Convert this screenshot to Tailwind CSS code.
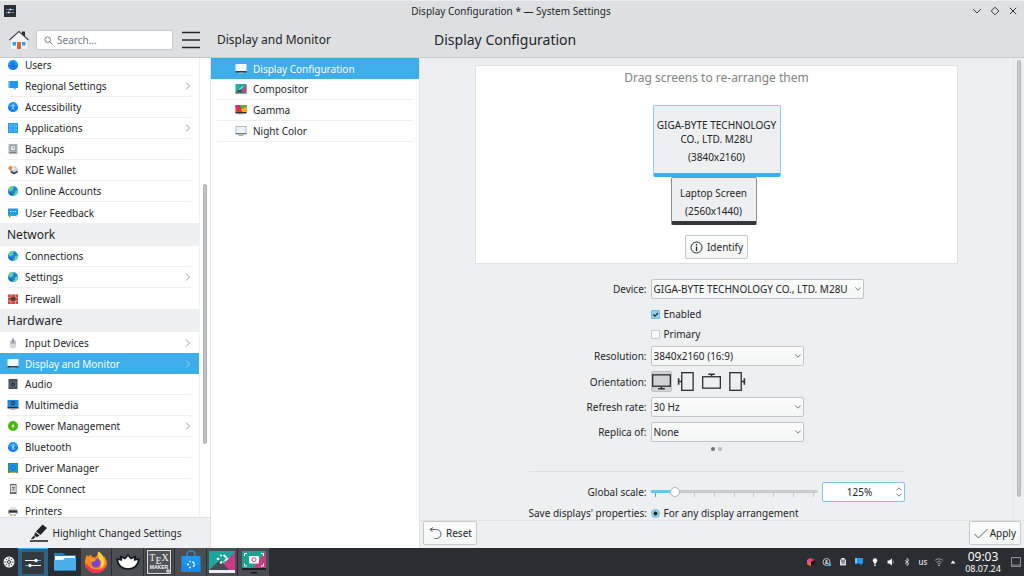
<!DOCTYPE html>
<html lang="en">
<head>
    <meta charset="UTF-8">
    <meta name="viewport" content="width=device-width, initial-scale=1.0">
    <title>Display Configuration * — System Settings</title>
    <script src="https://cdn.jsdelivr.net/npm/@tailwindcss/browser@4"></script>
</head>
<body class="h-screen flex flex-col overflow-hidden bg-[#eeeff1] text-[#232629] text-[10px] leading-[14px] font-['Noto_Sans',sans-serif]">

    <!-- Shared icons -->
    <svg class="hidden" aria-hidden="true">
        <symbol id="chevron" viewBox="0 0 6 10"><path d="M1 1.5 4.5 5 1 8.5" fill="none" stroke="currentColor" stroke-width="0.9"/></symbol>
        <symbol id="down" viewBox="0 0 8 6"><path d="M1.3 1.5 4 4.2 6.7 1.5" fill="none" stroke="currentColor" stroke-width="0.9"/></symbol>
        <symbol id="globe" viewBox="0 0 12 12">
            <circle cx="6" cy="6" r="5" fill="#1d86d8"/>
            <path d="M1.2 5C2 2.4 4 1.1 6.4 1.1L7 2.4 5.4 3.6 6.6 4.6 4.6 5.4 3.4 6.8 2.4 5.6ZM8 6.6 9.9 5.2 11 6.2C10.8 8.6 9 10.6 6.9 10.9L6.4 9.4 8 8.2Z" fill="#5fd6a0"/>
            <path d="M2.2 7 4.6 7.8 5.4 9.6 4.8 10.8C3 10.3 1.6 8.9 1.2 7.2Z" fill="#1669b8"/>
        </symbol>
        <symbol id="monitor" viewBox="0 0 12 12">
            <rect x="0.5" y="1" width="11" height="7.5" fill="#f3f7fa"/>
            <rect x="0.5" y="8" width="11" height="1.5" fill="#343a40"/>
            <rect x="3.5" y="9.7" width="5" height="1" fill="#aab0b5"/>
        </symbol>
        <symbol id="bluedot" viewBox="0 0 12 12"><circle cx="6" cy="6" r="5" fill="#1d99f3"/><path d="M1 6a5 5 0 0 0 10 0" fill="#147ff0"/></symbol>
    </svg>

    <!-- Window title -->
    <header class="shrink-0 bg-[#dedfe1] border-b border-[#c6c8ca]">
        <div class="h-[21px] grid grid-cols-[1fr_auto_1fr] items-center border-t border-[#eceded] pl-1 pr-[6px]">
            <svg class="size-3" viewBox="0 0 12 12">
                <rect width="12" height="12" rx="0.5" fill="#2b3035"/>
                <path d="M2 4.5h8M2 7.5h8" stroke="#9aa3aa" stroke-width="0.7"/>
                <path d="M6.5 4.5H10M2 7.5h2.5" stroke="#3daee9" stroke-width="1.1"/>
                <path d="M5.5 3.7h1.6v1.6H5.5zM4 6.7h1.6v1.6H4z" fill="#fff"/>
            </svg>
            <span>Display Configuration * — System Settings</span>
            <div class="flex justify-end gap-2 text-[#34383b]">
                <button aria-label="Minimize"><svg class="size-[10px]" viewBox="0 0 10 10"><path d="M1.2 3.2 5 7 8.8 3.2" fill="none" stroke="currentColor"/></svg></button>
                <button aria-label="Maximize"><svg class="size-[10px]" viewBox="0 0 10 10"><path d="M5 1.2 8.8 5 5 8.8 1.2 5Z" fill="none" stroke="currentColor"/></svg></button>
                <button aria-label="Close"><svg class="size-[10px]" viewBox="0 0 10 10"><path d="M1.8 1.8 8.2 8.2M8.2 1.8 1.8 8.2" fill="none" stroke="currentColor"/></svg></button>
            </div>
        </div>
        <div class="h-9 pt-[2px] flex items-center">
            <div class="w-[210px] shrink-0 flex items-center pl-2">
                <button aria-label="Home">
                    <svg class="size-[22px]" viewBox="0 0 22 22">
                        <path d="M3 10 11 3.5 19 10V20H3Z" fill="#f6f6f6"/>
                        <path d="M14 2.5h3V8l-3-2.5Z" fill="#2b2f33"/>
                        <path d="M1.5 11 11 2.4 20.5 11" fill="none" stroke="#3a3f44" stroke-width="1.1"/>
                        <path d="M4.5 13H8v3.5H4.5zM14 13h3.5v3.5H14z" fill="#2c9fe8"/>
                        <path d="M9 13h4v7H9z" fill="#e0602c"/>
                    </svg>
                </button>
                <label class="flex items-center w-[137px] h-5 ml-[6px] pl-[7px] gap-1 bg-white border border-[#c9cccf] rounded-xs">
                    <svg class="size-[9px] shrink-0" viewBox="0 0 9 9"><g fill="none" stroke="#707d8a"><circle cx="3.7" cy="3.7" r="2.8"/><path d="M5.8 5.8 8.5 8.5"/></g></svg>
                    <input type="text" aria-label="Search" placeholder="Search..." class="w-full outline-none placeholder:text-[#707d8a]">
                </label>
                <button aria-label="Menu" class="ml-2">
                    <svg class="w-5 h-[18px]" viewBox="0 0 20 18"><path d="M1 1.5h18M1 9h18M1 16.5h18" stroke="#232629" stroke-width="1.5"/></svg>
                </button>
            </div>
            <h2 class="w-[210px] shrink-0 pl-[7px] text-[12px]">Display and Monitor</h2>
            <h1 class="pl-[14px] text-[14px]">Display Configuration</h1>
        </div>
    </header>

    <div class="flex-1 min-h-0 flex">
        <!-- Categories -->
        <aside class="w-[210px] shrink-0 flex flex-col">
            <div class="flex-1 min-h-0 flex bg-white overflow-hidden">
                <nav class="w-[200px] -mt-[3px] border-r border-[#f0f1f2]">
                    <a href="#" class="h-[21px] ml-[7px] mr-2 flex items-center gap-[6px] border-b border-[#eeeff0]">
                        <svg class="size-3" viewBox="0 0 12 12"><use href="#bluedot"/><g fill="none" stroke="#0b5fc0" stroke-width="0.7"><circle cx="6" cy="4.8" r="1.3"/><path d="M3.8 8.5C4.2 6.5 7.8 6.5 8.2 8.5"/></g></svg>
                        Users</a>
                    <a href="#" class="h-[21px] ml-[7px] mr-2 flex items-center gap-[6px] border-b border-[#eeeff0]">
                        <svg class="size-3" viewBox="0 0 12 12"><path d="M1 1h8v7H1z" fill="#8ecdf9"/><path d="M2.5 1H11v7H8.5v2L6.5 8h-4Z" fill="#1d99f3"/></svg>
                        <span class="flex-1">Regional Settings</span><svg class="w-[6px] h-[10px] text-[#8a8d90]"><use href="#chevron"/></svg></a>
                    <a href="#" class="h-[21px] ml-[7px] mr-2 flex items-center gap-[6px] border-b border-[#eeeff0]">
                        <svg class="size-3" viewBox="0 0 12 12"><use href="#bluedot"/><path d="M6 3v3.5M4.2 4.5 6 5.2l1.8-.7M4.8 8.5 6 6.5l1.2 2" fill="none" stroke="#bfe3ff" stroke-width="0.8"/></svg>
                        Accessibility</a>
                    <a href="#" class="h-[21px] ml-[7px] mr-2 flex items-center gap-[6px] border-b border-[#eeeff0]">
                        <svg class="size-3" viewBox="0 0 12 12"><rect x="1" y="1" width="10" height="10" rx="0.5" fill="#1d99f3"/><path d="M2.5 2.5H5V5H2.5zM7 2.5h2.5V5H7zM2.5 7H5v2.5H2.5zM7 7h2.5v2.5H7z" fill="none" stroke="#8fd0ff" stroke-width="0.6"/></svg>
                        <span class="flex-1">Applications</span><svg class="w-[6px] h-[10px] text-[#8a8d90]"><use href="#chevron"/></svg></a>
                    <a href="#" class="h-[21px] ml-[7px] mr-2 flex items-center gap-[6px] border-b border-[#eeeff0]">
                        <svg class="size-3" viewBox="0 0 12 12"><rect x="1.5" y="1" width="9" height="10" fill="#b4b7b9"/><circle cx="6" cy="5" r="3" fill="#e8e9ea" stroke="#74787b" stroke-width="0.7"/><path d="M6 3.5V5h1.5M2.5 9.5h7" fill="none" stroke="#666a6d" stroke-width="0.7"/></svg>
                        Backups</a>
                    <a href="#" class="h-[21px] ml-[7px] mr-2 flex items-center gap-[6px] border-b border-[#eeeff0]">
                        <svg class="size-3" viewBox="0 0 12 12"><path d="M1 4 4 1.5 7 4.5 4 7.5Z" fill="#ef7e32"/><path d="M5 3 8.5 2 11 5 10.5 8.5 7 10 3.5 7.5Z" fill="#c9cfd4"/><path d="M4 6.5 7 8.5 10.8 6.5 10.5 8.5 7 10.5 3.5 8.5Z" fill="#3c4854"/><circle cx="6.5" cy="5" r="1.2" fill="#fff"/></svg>
                        KDE Wallet</a>
                    <a href="#" class="h-[21px] ml-[7px] mr-2 flex items-center gap-[6px] border-b border-[#eeeff0]">
                        <svg class="size-3"><use href="#globe"/></svg>
                        Online Accounts</a>
                    <a href="#" class="h-[21px] ml-[7px] mr-2 flex items-center gap-[6px]">
                        <svg class="size-3" viewBox="0 0 12 12"><path d="M1 3h8v6H4l-2 2V9H1Z" fill="#57c21c"/><path d="M1 1.5h10V8H9.5v2L7.5 8H1Z" fill="#1d99f3"/><path d="M3 4.5h1.2M5.5 4.5h1.2M8 4.5h1.2" stroke="#fff" stroke-width="1.1"/></svg>
                        User Feedback</a>
                    <h3 class="h-[23px] pl-[7px] flex items-center bg-[#eeeff1] text-[12px]">Network</h3>
                    <a href="#" class="h-[21px] ml-[7px] mr-2 flex items-center gap-[6px] border-b border-[#eeeff0]">
                        <svg class="size-3"><use href="#globe"/></svg>
                        Connections</a>
                    <a href="#" class="h-[21px] ml-[7px] mr-2 flex items-center gap-[6px] border-b border-[#eeeff0]">
                        <svg class="size-3"><use href="#globe"/></svg>
                        <span class="flex-1">Settings</span><svg class="w-[6px] h-[10px] text-[#8a8d90]"><use href="#chevron"/></svg></a>
                    <a href="#" class="h-[21px] ml-[7px] mr-2 flex items-center gap-[6px]">
                        <svg class="size-3" viewBox="0 0 12 12"><rect x="1" y="1.5" width="10" height="9.5" fill="#d4453c"/><path d="M1 4.5h10M1 8h10M4 1.5v3M8.5 1.5v3M4 8v3M8.5 8v3" stroke="#f2c2b8" stroke-width="0.6"/><path d="M3 4.5 6 4l3 .5L7.5 8h-3Z" fill="#4a4144"/></svg>
                        Firewall</a>
                    <h3 class="h-[23px] pl-[7px] flex items-center bg-[#eeeff1] text-[12px]">Hardware</h3>
                    <a href="#" class="h-[21px] ml-[7px] mr-2 flex items-center gap-[6px]">
                        <svg class="size-3" viewBox="0 0 12 12"><rect x="3" y="2.5" width="6" height="8.5" rx="3" fill="#b9bfc5"/><path d="M6 1v5" stroke="#6b7278" stroke-width="0.9"/><path d="M3 7a3 3.5 0 0 0 6 0" fill="#d7dbdf"/></svg>
                        <span class="flex-1">Input Devices</span><svg class="w-[6px] h-[10px] text-[#8a8d90]"><use href="#chevron"/></svg></a>
                    <a href="#" class="h-[21px] pl-[7px] pr-2 flex items-center gap-[6px] bg-[#3daee9] text-[#fcfcfc]">
                        <svg class="size-3"><use href="#monitor"/></svg>
                        <span class="flex-1">Display and Monitor</span><svg class="w-[6px] h-[10px] text-[#a5d8f3]"><use href="#chevron"/></svg></a>
                    <a href="#" class="h-[21px] ml-[7px] mr-2 flex items-center gap-[6px] border-b border-[#eeeff0]">
                        <svg class="size-3" viewBox="0 0 12 12"><rect x="1.5" y="1" width="9" height="10" fill="#454f5b"/><circle cx="6" cy="6.3" r="2.7" fill="#232a33" stroke="#8794a1" stroke-width="0.7"/><circle cx="6" cy="6.3" r="0.8" fill="#6d7a86"/></svg>
                        Audio</a>
                    <a href="#" class="h-[21px] ml-[7px] mr-2 flex items-center gap-[6px] border-b border-[#eeeff0]">
                        <svg class="size-3" viewBox="0 0 12 12"><rect x="0.5" y="1" width="11" height="7.5" fill="#1d88e0"/><rect x="0.5" y="8" width="11" height="1.5" fill="#2a2e32"/><circle cx="6" cy="4" r="1.9" fill="#1b2a3a"/><path d="M5.5 3.2 7 4l-1.500.8Z" fill="#fff"/><rect x="3.5" y="9.8" width="5" height="0.9" fill="#9aa0a5"/></svg>
                        Multimedia</a>
                    <a href="#" class="h-[21px] ml-[7px] mr-2 flex items-center gap-[6px] border-b border-[#eeeff0]">
                        <svg class="size-3" viewBox="0 0 12 12"><circle cx="6" cy="6" r="5" fill="#4eb70c"/><path d="M6.5 3.5 4.5 6.5h1.3L5.5 8.7 7.6 5.6H6.3Z" fill="#fff"/></svg>
                        <span class="flex-1">Power Management</span><svg class="w-[6px] h-[10px] text-[#8a8d90]"><use href="#chevron"/></svg></a>
                    <a href="#" class="h-[21px] ml-[7px] mr-2 flex items-center gap-[6px] border-b border-[#eeeff0]">
                        <svg class="size-3" viewBox="0 0 12 12"><use href="#bluedot"/><path d="M4.5 4.5 7.5 7.5 6 8.8V3.2L7.5 4.5 4.5 7.5" fill="none" stroke="#bfe3ff" stroke-width="0.7"/></svg>
                        Bluetooth</a>
                    <a href="#" class="h-[21px] ml-[7px] mr-2 flex items-center gap-[6px] border-b border-[#eeeff0]">
                        <svg class="size-3" viewBox="0 0 12 12"><rect x="1" y="1" width="10" height="10" fill="#3f8f4f"/><rect x="2.3" y="2" width="8" height="7.5" fill="#1d99f3"/><circle cx="6.2" cy="5.7" r="2.2" fill="none" stroke="#0c5cae" stroke-width="0.7"/><path d="M2.5 10.5h7" stroke="#e3c94a" stroke-width="0.7"/></svg>
                        Driver Manager</a>
                    <a href="#" class="h-[21px] ml-[7px] mr-2 flex items-center gap-[6px] border-b border-[#eeeff0]">
                        <svg class="size-3" viewBox="0 0 12 12"><rect x="3" y="1" width="6.5" height="10" rx="0.5" fill="#5e6569"/><rect x="3.7" y="2.2" width="5.1" height="7" fill="#dfe2e4"/><path d="M5 4.5h2.5L5.5 7h2" fill="none" stroke="#4a5054" stroke-width="0.8"/></svg>
                        KDE Connect</a>
                    <a href="#" class="h-[21px] ml-[7px] mr-2 flex items-center gap-[6px]">
                        <svg class="size-3" viewBox="0 0 12 12"><rect x="3" y="2" width="6" height="3" fill="#e2e4e6"/><rect x="1" y="4.5" width="10" height="4.5" rx="0.8" fill="#a6abaf"/><rect x="2" y="5.5" width="8" height="2" fill="#2c3034"/><rect x="3" y="8" width="6" height="2.5" fill="#fff"/><path d="M3 10h2" stroke="#e04c3c"/><path d="M5 10h2" stroke="#e8c53a"/><path d="M7 10h2" stroke="#3fae5a"/></svg>
                        Printers</a>
                </nav>
                <div class="flex-1 flex justify-center">
                    <div class="w-1 h-[260px] mt-[126px] rounded-full bg-[#c0c3c4] border border-[#aeb1b3]"></div>
                </div>
            </div>
            <button class="h-[31px] shrink-0 flex items-center justify-center gap-1 border-t border-[#dfe0e2]">
                <svg class="size-5" viewBox="0 0 20 20"><path d="M1 17.2h18v1.6H1z" fill="#232629"/><path d="M13.5 1.5 18 5 11.5 12 7 8.5Z" fill="#232629"/><path d="M6.4 9.3 10.7 12.7 8 14 5.5 14.5 4.5 16H1.8L5 12.5Z" fill="#232629"/><path d="M5.3 12.7 7.3 14.1" stroke="#eeeff1" stroke-width="0.8"/></svg>
                Highlight Changed Settings
            </button>
        </aside>

        <!-- Pages of the chosen category -->
        <nav class="w-[210px] shrink-0 bg-white border-x border-[#e3e4e6]">
            <a href="#" class="h-[21px] pl-6 flex items-center gap-[6px] bg-[#3daee9] text-[#fcfcfc]">
                <svg class="size-3"><use href="#monitor"/></svg>Display Configuration</a>
            <a href="#" class="h-[21px] mx-[6px] pl-[18px] flex items-center gap-[6px] border-b border-[#eeeff0]">
                <svg class="size-3" viewBox="0 0 12 12"><rect x="0.5" y="1" width="11" height="9.500" fill="#2aa79b"/><path d="M11.5 1.5v8h-6Z" fill="#cf3f8d"/><path d="M0.5 9.5 5 6l3 3.5Z" fill="#3f4a52"/><path d="M4 6.5 8 3.5" stroke="#d9f5f0" stroke-width="0.9"/><rect x="0.5" y="9.3" width="11" height="1.2" fill="#6b747a"/></svg>
                Compositor</a>
            <a href="#" class="h-[21px] mx-[6px] pl-[18px] flex items-center gap-[6px] border-b border-[#eeeff0]">
                <svg class="size-3" viewBox="0 0 12 12"><rect x="0.5" y="1" width="11" height="7.5" fill="#e03a2e"/><path d="M4 1h7.5v3L6 5Z" fill="#5bb531"/><path d="M0.5 1H5L6 5 .5 4Z" fill="#d62a78"/><path d="M6 5 11.5 3.5v5H8Z" fill="#f0b41c"/><rect x="0.5" y="8" width="11" height="1.5" fill="#2a2e32"/><rect x="3.5" y="9.8" width="5" height="0.8" fill="#b5babe"/></svg>
                Gamma</a>
            <a href="#" class="h-[21px] mx-[6px] pl-[18px] flex items-center gap-[6px] border-b border-[#eeeff0]">
                <svg class="size-3" viewBox="0 0 12 12"><rect x="1" y="1.5" width="10" height="7" fill="#eaf4fa" stroke="#a5adb3" stroke-width="0.8"/><path d="M0.6 8.8h10.8" stroke="#596167"/><rect x="3.5" y="9.7" width="5" height="1" fill="#8b9196"/></svg>
                Night Color</a>
        </nav>

        <main class="flex-1 min-w-0 flex flex-col">
            <div class="flex-1 min-h-0 flex overflow-hidden">
                <div class="flex-1 pt-[7px]">
                    <section class="max-w-[483px] mx-auto pt-1 pb-1 flex flex-col items-center bg-white border border-[#dfe1e3]">
                        <p class="text-[12px] leading-4 text-[#7f8284]">Drag screens to re-arrange them</p>
                        <div class="w-32 h-[72px] mt-[19px] pt-3 text-center bg-[#eeeff1] border border-[#8ccdf0] border-b-4 border-b-[#3daee9] rounded-xs">
                            <p>GIGA-BYTE TECHNOLOGY CO., LTD. M28U</p>
                            <p class="mt-1">(3840x2160)</p>
                        </div>
                        <div class="w-[86px] h-12 mr-[6px] pt-2 text-center bg-[#eeeff1] border border-[#8c8f91] border-b-4 border-b-[#35393c] rounded-xs">
                            <p>Laptop Screen</p>
                            <p class="mt-1">(2560x1440)</p>
                        </div>
                        <button class="h-6 mt-[10px] px-1 flex items-center gap-1 bg-linear-to-b from-[#fcfcfc] to-[#f4f5f5] border border-[#c6c9cb] rounded-xs">
                            <svg class="size-[13px]" viewBox="0 0 13 13"><circle cx="6.5" cy="6.5" r="5.5" fill="none" stroke="#232629"/><path d="M6.5 5.5v4.5M6.5 3v1.4" stroke="#232629" stroke-width="1.3"/></svg>
                            Identify
                        </button>
                    </section>

                    <form class="max-w-[376px] mx-auto mt-[15px]">
                        <div class="grid grid-cols-[118px_1fr] gap-x-1 gap-y-[5px] items-center">
                            <label for="device" class="text-right">Device:</label>
                            <div class="relative w-[213px]">
                                <select id="device" class="block w-full h-5 pl-[2px] appearance-none bg-linear-to-b from-[#fcfcfc] to-[#f4f5f5] border border-[#c3c6c8] rounded-xs"><option>GIGA-BYTE TECHNOLOGY CO., LTD. M28U</option></select>
                                <svg class="absolute right-[2px] top-[7px] w-2 h-[6px] text-[#6a6e71] pointer-events-none"><use href="#down"/></svg>
                            </div>
                            <div class="col-start-2 pt-[3px] flex flex-col gap-[6px]">
                                <label class="flex items-center gap-1">
                                    <span class="relative size-[9px]"><input type="checkbox" checked class="block size-[9px] appearance-none bg-[#93cee9] border border-[#6cbce4] rounded-[1px]"><svg class="absolute inset-0 size-[9px] pointer-events-none" viewBox="0 0 9 9"><path d="M2.3 4.5 4 6.2 7 3" fill="none" stroke="#232629" stroke-width="1.2"/></svg></span>
                                    Enabled
                                </label>
                                <label class="flex items-center gap-1">
                                    <input type="checkbox" class="block size-[9px] appearance-none bg-[#fcfcfc] border border-[#c6c9cb] rounded-[1px]">
                                    Primary
                                </label>
                            </div>
                            <label for="resolution" class="text-right">Resolution:</label>
                            <div class="relative w-[153px]">
                                <select id="resolution" class="block w-full h-5 pl-[2px] appearance-none bg-linear-to-b from-[#fcfcfc] to-[#f4f5f5] border border-[#c3c6c8] rounded-xs"><option>3840x2160 (16:9)</option></select>
                                <svg class="absolute right-[2px] top-[7px] w-2 h-[6px] text-[#6a6e71] pointer-events-none"><use href="#down"/></svg>
                            </div>
                            <span class="text-right">Orientation:</span>
                            <div class="flex items-center gap-1">
                                <button type="button" aria-label="No rotation" class="size-[21px] bg-[#d0d2d4] border border-[#bfc1c3] rounded-xs"><svg class="size-[19px]" viewBox="0 0 20 20"><g stroke="#2f3336" fill="none"><rect x="0.7" y="3" width="18.6" height="12" stroke-width="1.4"/><path d="M6.5 17.7h7M10 15v2" stroke-width="1.7"/></g></svg></button>
                                <button type="button" aria-label="90° clockwise" class="size-[21px] p-px"><svg class="size-[19px]" viewBox="0 0 20 20"><g stroke="#2f3336" fill="none"><rect x="5" y="0.7" width="12" height="18.6" stroke-width="1.4"/><path d="M1.700 6.500v7M1.700 10H5" stroke-width="1.700"/></g></svg></button>
                                <button type="button" aria-label="Upside down" class="size-[21px] p-px"><svg class="size-[19px]" viewBox="0 0 20 20"><g stroke="#2f3336" fill="none"><rect x="0.7" y="5" width="18.6" height="12" stroke-width="1.4"/><path d="M6.500 2.300h7M10 2.300V5" stroke-width="1.700"/></g></svg></button>
                                <button type="button" aria-label="90° counterclockwise" class="size-[21px] p-px"><svg class="size-[19px]" viewBox="0 0 20 20"><g stroke="#2f3336" fill="none"><rect x="3" y="0.7" width="12" height="18.6" stroke-width="1.4"/><path d="M18.300 6.500v7M18.300 10H15" stroke-width="1.700"/></g></svg></button>
                            </div>
                            <label for="refresh" class="text-right">Refresh rate:</label>
                            <div class="relative w-[153px]">
                                <select id="refresh" class="block w-full h-5 pl-[2px] appearance-none bg-linear-to-b from-[#fcfcfc] to-[#f4f5f5] border border-[#c3c6c8] rounded-xs"><option>30 Hz</option></select>
                                <svg class="absolute right-[2px] top-[7px] w-2 h-[6px] text-[#6a6e71] pointer-events-none"><use href="#down"/></svg>
                            </div>
                            <label for="replica" class="text-right">Replica of:</label>
                            <div class="relative w-[153px]">
                                <select id="replica" class="block w-full h-5 pl-[2px] appearance-none bg-linear-to-b from-[#fcfcfc] to-[#f4f5f5] border border-[#c3c6c8] rounded-xs"><option>None</option></select>
                                <svg class="absolute right-[2px] top-[7px] w-2 h-[6px] text-[#6a6e71] pointer-events-none"><use href="#down"/></svg>
                            </div>
                        </div>

                        <div class="flex justify-center gap-[3px] mt-[5px]">
                            <span class="size-1 rounded-full bg-[#6f7275]"></span>
                            <span class="size-1 rounded-full bg-[#b7b9bb]"></span>
                        </div>
                        <hr class="mt-5 mb-[10px] border-[#dcdee0]">

                        <div class="grid grid-cols-[118px_1fr] gap-x-1 gap-y-1 items-center">
                            <label for="scale" class="text-right">Global scale:</label>
                            <div class="flex items-center gap-1">
                                <div class="relative flex-1 h-5">
                                    <div class="absolute inset-x-1 top-[11px] h-1 flex justify-between">
                                        <i class="w-px bg-[#3daee9]"></i><i class="w-px bg-[#3daee9]"></i><i class="w-px bg-[#c3c6c8]"></i><i class="w-px bg-[#c3c6c8]"></i><i class="w-px bg-[#c3c6c8]"></i><i class="w-px bg-[#c3c6c8]"></i><i class="w-px bg-[#c3c6c8]"></i><i class="w-px bg-[#c3c6c8]"></i><i class="w-px bg-[#c3c6c8]"></i>
                                    </div>
                                    <div class="absolute inset-x-0 top-2 h-[3px] rounded-full bg-[#d0d2d4] border border-[#c3c6c8]"><div class="w-6 h-px bg-[#6cc2ee] outline outline-[#6cc2ee]"></div></div>
                                    <input id="scale" type="range" min="100" max="300" step="25" value="125" class="relative block w-full h-[19px] appearance-none bg-transparent [&::-webkit-slider-thumb]:appearance-none [&::-webkit-slider-thumb]:size-[10px] [&::-webkit-slider-thumb]:rounded-full [&::-webkit-slider-thumb]:bg-[#fcfcfc] [&::-webkit-slider-thumb]:border [&::-webkit-slider-thumb]:border-[#b0b3b5]">
                                </div>
                                <div class="relative w-[83px]">
                                    <input type="text" aria-label="Global scale value" value="125%" class="block w-full h-5 pr-[7px] text-center bg-white border border-[#7cc6ec] rounded-xs">
                                    <svg class="absolute right-[2px] top-1 w-2 h-3" viewBox="0 0 8 12"><path d="M1.5 4.3 4 1.8 6.5 4.3M1.5 7.7 4 10.2 6.5 7.7" fill="none" stroke="#6a6e71" stroke-width="0.9"/></svg>
                                </div>
                            </div>
                            <span class="text-right whitespace-nowrap">Save displays' properties:</span>
                            <label class="flex items-center gap-1">
                                <input type="radio" name="save" checked class="block size-[9px] appearance-none rounded-full border border-[#6cbce4] bg-radial from-[#232629] from-35% to-[#93cee9] to-45%">
                                For any display arrangement
                            </label>
                        </div>
                    </form>
                </div>
                <div class="w-[11px] flex justify-center border-l border-[#e6e7e9]">
                    <div class="w-1 h-[437px] mt-[2px] rounded-full bg-[#c8cacc] border border-[#b5b7b9]"></div>
                </div>
            </div>
            <footer class="h-7 shrink-0 px-[3px] flex items-center justify-between border-t border-[#dfe0e2]">
                <button class="h-6 px-1 mb-[3px] flex items-center gap-1 bg-linear-to-b from-[#fcfcfc] to-[#f4f5f5] border border-[#c6c9cb] rounded-xs">
                    <svg class="size-[14px]" viewBox="0 0 14 14"><path d="M5 1.5 2 3.5 4.5 6M2 3.5H8.5A4 4 0 0 1 8.5 12.5H6.5" fill="none" stroke="#4d5154" stroke-width="0.9"/></svg>
                    Reset
                </button>
                <button class="h-6 px-1 mb-[3px] flex items-center gap-[2px] bg-linear-to-b from-[#fcfcfc] to-[#f4f5f5] border border-[#c6c9cb] rounded-xs">
                    <svg class="size-[14px]" viewBox="0 0 14 14"><path d="M0.5 8 4.5 12 13.5 3" fill="none" stroke="#4d5154" stroke-width="0.9"/></svg>
                    Apply
                </button>
            </footer>
        </main>
    </div>

    <!-- Taskbar -->
    <div class="h-7 shrink-0 flex items-center bg-[#2a2e32] text-[#fcfcfc]">
        <button aria-label="Start" class="w-[18px] flex justify-center">
            <svg class="size-3" viewBox="0 0 12 12"><circle cx="6" cy="6" r="5.5" fill="#f3f4f5"/><g fill="none" stroke="#2a2e32" stroke-width="0.9"><circle cx="6" cy="6" r="1.5"/><path d="M6 1.5v2M6 8.5v2M1.5 6h2M8.5 6h2M2.8 2.8l1.3 1.3M7.9 7.9l1.3 1.3M9.2 2.8 7.9 4.1M4.1 7.9 2.8 9.2"/></g></svg>
        </button>
        <div class="h-full flex gap-px">
            <button aria-label="System Settings" class="w-[30px] flex items-center justify-center bg-[#2f6384] border-t border-[#3daee9]">
                <svg class="size-[22px]" viewBox="0 0 22 22"><rect width="22" height="22" rx="1" fill="#33393f"/><path d="M3 8.5h16M3 13.5h16" stroke="#f0f2f3"/><path d="M3 13.5h5M15 8.5h4" stroke="#3daee9"/><circle cx="14" cy="8.5" r="1.7" fill="#fff"/><circle cx="8" cy="13.5" r="1.7" fill="#fff"/></svg>
            </button>
            <button aria-label="Files" class="w-[31px] flex items-center justify-center">
                <svg class="size-[22px]" viewBox="0 0 22 22"><path d="M0 2h9l2 2h11v6H0Z" fill="#1f7fb8"/><path d="M1 5h20v4H1z" fill="#f5f8fa"/><path d="M0 9h9l2-2h11v13H0Z" fill="#4bb0ea"/><path d="M0 19h22v1H0z" fill="#2b80b5"/></svg>
            </button>
            <button aria-label="Firefox" class="w-[30px] flex items-center justify-center bg-[#4a4e52]">
                <svg class="size-6" viewBox="0 0 24 24"><path d="M3 5 4.500 6.500 7 4.500 8 7 11 7.500 13.500 5 14 1.500C17 3 18.500 5 19 7.500L20 6C22 8.500 23 11 22.800 14 22 19.500 17.500 23 12 23 6 23 1.300 18.500 1 13 .9 10 1.500 7 3 5Z" fill="#ff8a1d"/><path d="M1.200 13C2 19 6 23 12 23s10-4 10.800-9c-3 5.500-7 6-11 5.500-5-.5-7.500-4-10.600-6.500Z" fill="#f0335c"/><path d="M14 1.500c4 2 7 6.500 6.500 11-.4 3-2 5-4.500 6 1.500-3.500 1.500-7-.5-9.500-1.500-2-1.800-4.500-1.500-7.500Z" fill="#ffd23c"/><circle cx="12" cy="13" r="4.500" fill="#7b43d6"/><path d="M4.500 8.500 9 8.500 12.500 9.500 10 11.500 8 12Z" fill="#ff9a22"/></svg>
            </button>
            <button aria-label="Lotus" class="w-[31px] flex items-center justify-center bg-[#4a4e52]">
                <svg class="size-6" viewBox="0 0 24 24"><path d="M1 9 5.5 10 4.5 6.5 9 8.5 12 5 15 8.5 19.5 6.5 18.5 10 23 9C22 15 18.5 19 12 19S2 15 1 9Z" fill="#fff" stroke="#121416" stroke-width="1.6" stroke-linejoin="round"/></svg>
            </button>
            <button aria-label="Texmaker" class="w-[30px] flex items-center justify-center bg-[#4a4e52]">
                <span class="relative size-6 bg-[#505458] border border-[#dcdedf] font-['Liberation_Serif',serif] text-[#f0f0f0] text-center outline outline-[#33373a]">
                    <span class="block text-[10px] leading-[13px]">T<sub class="text-[10px]">E</sub>X</span>
                    <span class="block text-[5px] leading-[6px] font-bold font-['Liberation_Sans',sans-serif]">MAKER</span>
                    <svg class="absolute right-0 bottom-0 size-1" viewBox="0 0 4 4"><circle cx="2" cy="2" r="1.3" fill="none" stroke="#fff"/></svg>
                </span>
            </button>
            <button aria-label="Discover" class="w-[31px] flex items-center justify-center bg-[#4a4e52]">
                <svg class="size-6" viewBox="0 0 24 24"><path d="M8 8V4.500Q8 1 12 1T16 4.500V8" fill="none" stroke="#2a9be8" stroke-width="1.200"/><path d="M2.500 6h19v16h-19z" fill="#1d96f0"/><path d="M2.500 15h19v7h-19z" fill="#1787e8"/><path d="M13.500 11.500 16 14.500 13.500 17.500" fill="none" stroke="#fff" stroke-width="1.300" stroke-dasharray="3 1"/><circle cx="9" cy="14.500" r="1.100" fill="#fff"/><circle cx="11" cy="17.500" r="0.900" fill="#fff"/><circle cx="11" cy="11.500" r="0.800" fill="#fff"/></svg>
            </button>
            <button aria-label="Desktop" class="w-[30px] flex items-center justify-center bg-[#4a4e52]">
                <svg class="size-[26px]" viewBox="0 0 26 26"><path d="M0 2h26v19H0z" fill="#1fa69a"/><path d="M26 3v18H9Z" fill="#c93b87"/><path d="M0 21 11 11l9 10Z" fill="#454c52"/><path d="M0 21h26v3H0z" fill="#eceeef"/><path d="M14.500 6 18.500 9.500 14.500 13" fill="none" stroke="#fff" stroke-width="1.700" stroke-dasharray="4 1"/><circle cx="9" cy="10" r="1.300" fill="#fff"/><circle cx="12" cy="13.500" r="1.200" fill="#fff"/><circle cx="12" cy="6.500" r="1" fill="#fff"/></svg>
            </button>
            <button aria-label="Spectacle" class="w-[31px] flex items-center justify-center bg-[#4a4e52]">
                <svg class="size-[26px]" viewBox="0 0 26 26"><path d="M1 2h24v18H1z" fill="#1fa28f"/><path d="M25 2v18H11Z" fill="#c5407f"/><path d="M1 19h24v2H1z" fill="#1d2023"/><path d="M10 23h6v1.500h-6z" fill="#16181a"/><rect x="8" y="7" width="10" height="7.500" rx="1" fill="#fff"/><circle cx="13" cy="10.700" r="2" fill="#fff" stroke="#c5407f"/><path d="M3.500 7V4.500H6M20 4.500h2.500V7M3.500 14.500V17H6M22.500 14.500V17H20" fill="none" stroke="#fff"/></svg>
            </button>
        </div>

        <div class="ml-auto flex items-center gap-[6px]">
            <svg class="size-[10px]" viewBox="0 0 10 10"><path d="M5 1 9 3v4L5 9.2 1 7V3Z" fill="#e5303f"/><path d="M5 1 1 3v2.5L5 5Z" fill="#e546a8"/><path d="M5 5 9 3v4L5 9.2Z" fill="#0e0f10"/><path d="M1 6 5 5v4.2L1 7Z" fill="#f36a34"/></svg>
            <svg class="size-[10px]" viewBox="0 0 10 10"><circle cx="4.5" cy="5" r="3.5" fill="none" stroke="#dfe1e2" stroke-width="0.8"/><path d="M3.5 3h2v2l1 2H2.5l1-2Z" fill="#b5b9bc"/><circle cx="7.5" cy="7.5" r="1.7" fill="#3daee9"/></svg>
            <svg class="size-[10px]" viewBox="0 0 10 10"><path d="M2 2.5h6v6H2Z" fill="#d5d8da"/><path d="M3.5 1h3v1.5h-3z" fill="#fff"/><path d="M3 4h4M4 6h2.5" stroke="#2a2e32" stroke-width="0.9"/></svg>
            <svg class="size-[10px]" viewBox="0 0 10 10"><path d="M1 1h8v5.5H7.5v2L5.5 6.5H1Z" fill="#1d99f3"/><path d="M1 1h2v5.5H1Z" fill="#70c0fa"/></svg>
            <svg class="size-[10px]" viewBox="0 0 10 10"><circle cx="5" cy="3.5" r="2.2" fill="#fcfcfc"/><path d="M3.5 4.5h3L5.8 6.8H4.2ZM4.2 7.5h1.6V9H4.2z" fill="#fcfcfc"/></svg>
            <svg class="size-[10px]" viewBox="0 0 10 10"><path d="M1.5 3.5h1.7L6 1.5v7L3.2 6.5H1.5Z" fill="#f3f4f5"/><path d="M7 3.5Q8.2 5 7 6.5" fill="none" stroke="#a7abae" stroke-width="0.8"/></svg>
            <svg class="size-[10px]" viewBox="0 0 10 10"><path d="M3 3.3 7 6.7 5 8.6V1.4L7 3.3 3 6.7" fill="none" stroke="#d9dcde" stroke-width="0.8"/></svg>
            <span class="text-[8px] w-[10px] flex justify-center">us</span>
            <svg class="size-[10px]" viewBox="0 0 10 10"><g fill="none" stroke="#a7abae" stroke-width="0.8"><path d="M0.8 3.5Q5 0 9.2 3.5M2.2 5.2Q5 2.8 7.8 5.2M3.5 6.8Q5 5.5 6.5 6.8"/></g><circle cx="5" cy="8.3" r="0.8" fill="#d9dcde"/></svg>
            <svg class="size-[6px]" viewBox="0 0 6 6"><path d="M0.5 4.500 3 1.500 5.500 4.500Z" fill="#fcfcfc"/></svg>
            <div class="ml-[2px] w-[38px] flex flex-col items-center">
                <time class="text-[12px] leading-[14px]">09:03</time>
                <time class="text-[9px] leading-[10px]">08.07.24</time>
            </div>
            <svg class="size-[10px] ml-[3px] mr-[3px]" viewBox="0 0 10 10"><path d="M0.5 0.5h9v9h-9zM1 8h8" fill="none" stroke="#a7abae" stroke-width="0.8"/></svg>
        </div>
    </div>
</body>
</html>
